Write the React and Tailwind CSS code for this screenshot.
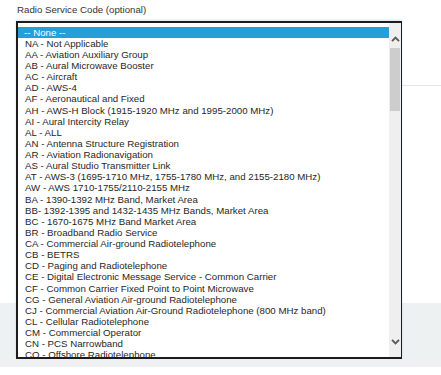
import React from "react";

const options = [
  "-- None --",
  "NA - Not Applicable",
  "AA - Aviation Auxiliary Group",
  "AB - Aural Microwave Booster",
  "AC - Aircraft",
  "AD - AWS-4",
  "AF - Aeronautical and Fixed",
  "AH - AWS-H Block (1915-1920 MHz and 1995-2000 MHz)",
  "AI - Aural Intercity Relay",
  "AL - ALL",
  "AN - Antenna Structure Registration",
  "AR - Aviation Radionavigation",
  "AS - Aural Studio Transmitter Link",
  "AT - AWS-3 (1695-1710 MHz, 1755-1780 MHz, and 2155-2180 MHz)",
  "AW - AWS 1710-1755/2110-2155 MHz",
  "BA - 1390-1392 MHz Band, Market Area",
  "BB- 1392-1395 and 1432-1435 MHz Bands, Market Area",
  "BC - 1670-1675 MHz Band Market Area",
  "BR - Broadband Radio Service",
  "CA - Commercial Air-ground Radiotelephone",
  "CB - BETRS",
  "CD - Paging and Radiotelephone",
  "CE - Digital Electronic Message Service - Common Carrier",
  "CF - Common Carrier Fixed Point to Point Microwave",
  "CG - General Aviation Air-ground Radiotelephone",
  "CJ - Commercial Aviation Air-Ground Radiotelephone (800 MHz band)",
  "CL - Cellular Radiotelephone",
  "CM - Commercial Operator",
  "CN - PCS Narrowband",
  "CO - Offshore Radiotelephone",
];

function Chevron({ up }) {
  return (
    <svg width="9" height="6" viewBox="0 0 9 6" className="block">
      <polyline
        points={up ? "1,5.2 4.5,1.6 8,5.2" : "1,0.8 4.5,4.4 8,0.8"}
        fill="none"
        stroke="#5a5a5a"
        strokeWidth="1.9"
      />
    </svg>
  );
}

export default function App() {
  return (
    <div className="relative w-[441px] h-[375px] bg-white overflow-hidden font-['Liberation_Sans',Arial,sans-serif]">
      {/* page background content */}
      <div className="flex flex-col">
        <div className="h-[85px] pt-[4px] pl-[17px] text-[9.7px] leading-[12px] text-[#333333]">
          Radio Service Code (optional)
        </div>
        <div className="ml-[402px] h-px bg-[#e4e4e4]" />
        <div className="h-[217px]" />
        <div className="h-[64px] bg-[#eef1f2]" />
      </div>

      {/* expanded listbox */}
      <div className="absolute left-[16px] top-[21px] w-[386px] h-[338px] border-2 border-r-[1.5px] border-[#1c1c1c] bg-white flex shadow-[0_-1px_2px_rgba(120,170,230,0.35)]">
        <div className="flex-1 overflow-hidden pt-[3.7px]">
          {options.map((o, i) => (
            <div
              key={o}
              className={
                i === 0
                  ? "h-[11.14px] pl-[6px] whitespace-nowrap text-[9.7px] leading-[11.14px] bg-[#249fda] text-white"
                  : "h-[11.14px] pl-[7px] whitespace-nowrap text-[9.7px] leading-[11.14px] text-[#1f1f1f]"
              }
            >
              {o}
            </div>
          ))}
        </div>
        <div className="w-[12px] bg-[#efefef] flex flex-col">
          <div className="h-[25px] pt-[6px] flex items-center justify-center">
            <Chevron up />
          </div>
          <div className="h-[63px] mx-[1px] bg-[#cdcdcd]" />
          <div className="flex-1" />
          <div className="h-[25px] pb-[6px] flex items-center justify-center">
            <Chevron />
          </div>
        </div>
      </div>
    </div>
  );
}
